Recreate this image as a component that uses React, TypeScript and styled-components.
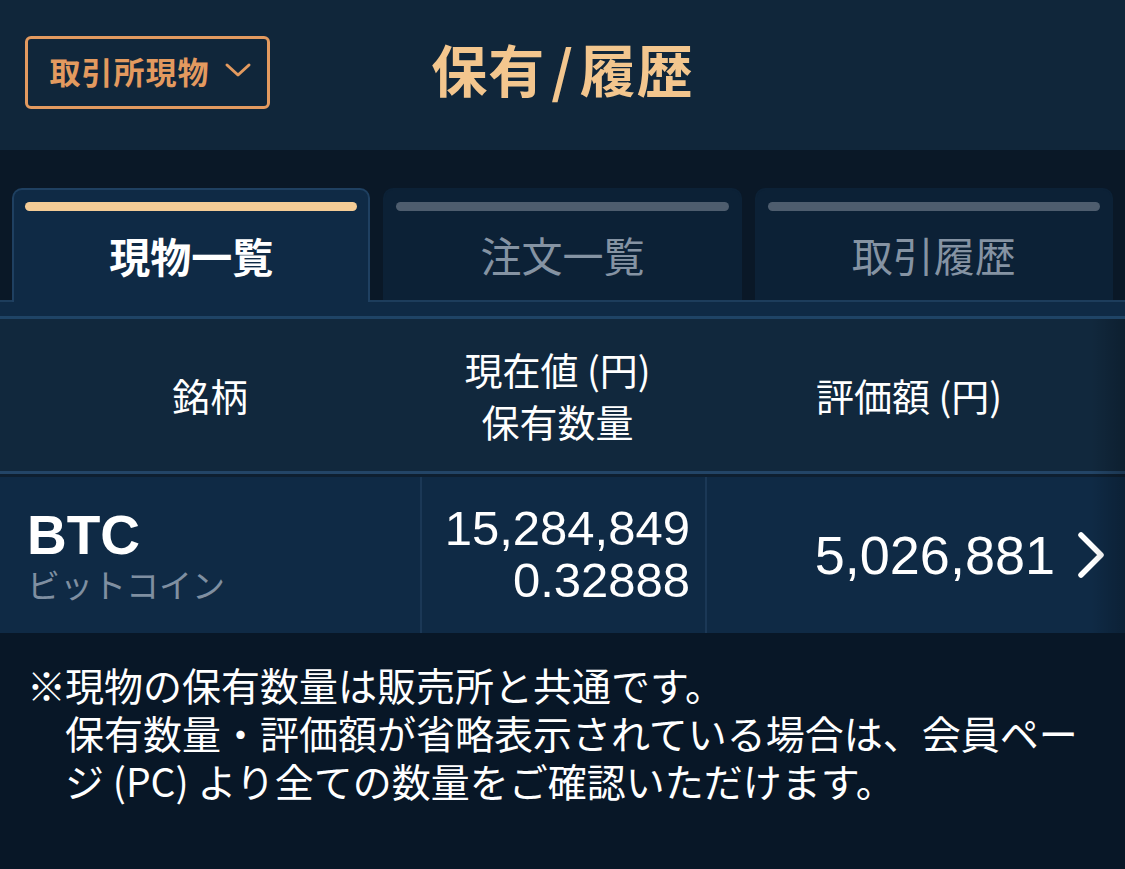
import React from 'react'
import styled, { createGlobalStyle } from 'styled-components'

const jp = `"Noto Sans CJK JP", "Noto Sans", sans-serif`
const num = `"Liberation Sans", Arial, "Noto Sans CJK JP", sans-serif`

const GlobalStyle = createGlobalStyle`
    html, body {
        margin: 0;
        padding: 0;
        background: #081727;
    }
    body {
        font-family: ${jp};
        color: #ffffff;
        -webkit-font-smoothing: antialiased;
    }
`

const Page = styled.div`
    width: 1125px;
    min-height: 869px;
    background: #081727;
    overflow: hidden;
`

const Header = styled.header`
    height: 150px;
    background: #10263a;
    display: grid;
    grid-template-columns: 1fr auto 1fr;
    align-items: center;
    padding: 0 25px 6px;
    box-sizing: border-box;
`

const MarketButton = styled.button`
    justify-self: start;
    width: 245px;
    height: 73px;
    border: 3px solid #e39a5f;
    border-radius: 6px;
    background: transparent;
    color: #e39a5f;
    font-family: ${jp};
    font-size: 31px;
    font-weight: 700;
    letter-spacing: 1px;
    display: flex;
    align-items: center;
    justify-content: center;
    gap: 14px;
    padding: 0 0 4px 6px;
    cursor: pointer;
`

const Title = styled.h1`
    margin: 0 0 10px;
    font-family: ${jp};
    font-size: 56px;
    font-weight: 700;
    color: #f3c68e;
    letter-spacing: 1px;
`

const Slash = styled.span`
    margin: 0 6px;
`

const Spacer = styled.div`
    height: 38px;
    background: #0a1827;
`

const TabBar = styled.div`
    display: flex;
    gap: 13px;
    padding: 0 12px;
    height: 112px;
    border-bottom: 2px solid #1d3d5c;
    background: #0a1827;
`

const Tab = styled.div<{ $active?: boolean }>`
    flex: 1;
    display: flex;
    flex-direction: column;
    padding: 12px 11px 0;
    box-sizing: border-box;
    border-radius: 10px 10px 0 0;
    background: ${(p) => (p.$active ? '#0f2a45' : '#0c2136')};
    border: 2px solid ${(p) => (p.$active ? '#1f4061' : '#0c2136')};
    border-bottom: none;
    margin-bottom: ${(p) => (p.$active ? '-2px' : '0')};
`

const TabBarIndicator = styled.div<{ $active?: boolean }>`
    height: 9px;
    border-radius: 5px;
    background: ${(p) => (p.$active ? '#f4cc96' : '#4e5d6e')};
`

const TabLabel = styled.div<{ $active?: boolean }>`
    flex: 1;
    display: flex;
    align-items: center;
    justify-content: center;
    font-size: 41px;
    font-weight: ${(p) => (p.$active ? 700 : 400)};
    color: ${(p) => (p.$active ? '#ffffff' : '#8593a3')};
    padding-bottom: 4px;
`

const Strip = styled.div`
    height: 14px;
    background: #0f2a45;
    border-bottom: 3px solid #1f4466;
`

const Table = styled.div`
    position: relative;

    &::after {
        content: '';
        position: absolute;
        top: 0;
        right: 0;
        bottom: 0;
        width: 34px;
        background: linear-gradient(to right, rgba(0, 0, 0, 0), rgba(0, 0, 0, 0.22));
        pointer-events: none;
    }
`

const HeadRow = styled.div`
    display: grid;
    grid-template-columns: 420px 285px 1fr;
    height: 152px;
    background: #11283d;
    border-bottom: 3px solid #234567;
`

const HeadCell = styled.div`
    display: flex;
    flex-direction: column;
    align-items: center;
    justify-content: center;
    font-size: 38px;
    line-height: 52px;
    color: #ffffff;
`

const MidHeadCell = styled(HeadCell)`
    padding-right: 10px;
`

const RightHeadCell = styled(HeadCell)`
    padding-right: 12px;
`

const DataRow = styled.div`
    display: grid;
    grid-template-columns: 420px 285px 1fr;
    height: 159px;
    background: #0f2a45;
    border-top: 3px solid #0e1f30;
    box-sizing: border-box;
`

const Cell = styled.div<{ $align?: 'left' | 'right' }>`
    display: flex;
    flex-direction: column;
    justify-content: center;
    align-items: ${(p) => (p.$align === 'right' ? 'flex-end' : 'flex-start')};
    border-left: 2px solid #1b3856;
    &:first-child {
        border-left: none;
    }
`

const SymbolCell = styled(Cell)`
    padding-left: 27px;
`

const Symbol = styled.div`
    font-family: ${num};
    font-size: 55px;
    font-weight: 700;
    line-height: 58px;
    color: #ffffff;
`

const SymbolName = styled.div`
    font-size: 33px;
    line-height: 40px;
    color: #7f8fa1;
`

const PriceCell = styled(Cell)`
    padding-right: 15px;
    padding-bottom: 2px;
`

const Figure = styled.div<{ $size: number }>`
    font-family: ${num};
    font-size: ${(p) => p.$size}px;
    line-height: 52px;
    color: #ffffff;
`

const ValueCell = styled(Cell)`
    flex-direction: row;
    align-items: center;
    justify-content: flex-end;
    gap: 20px;
    padding-right: 18px;
`

const Note = styled.div`
    display: flex;
    padding: 27px 20px 0 27px;
    font-size: 39px;
    line-height: 48px;
    color: #ffffff;
`

const Mark = styled.span`
    flex: none;
    width: 38px;
`

const NoteText = styled.p`
    margin: 0;
`

const Chevron = () => (
    <svg width="32" height="48" viewBox="0 0 32 48" fill="none">
        <polyline points="6,4 26,24 6,44" stroke="#ffffff" strokeWidth="5.5" strokeLinecap="round" strokeLinejoin="round" />
    </svg>
)

const DownChevron = () => (
    <svg width="28" height="18" viewBox="0 0 28 18" fill="none">
        <polyline points="3,4 14,14 25,4" stroke="#e39a5f" strokeWidth="3" strokeLinecap="round" strokeLinejoin="round" />
    </svg>
)

const tabs = ['現物一覧', '注文一覧', '取引履歴']

export default function App() {
    return (
        <Page>
            <GlobalStyle />
            <Header>
                <MarketButton>
                    取引所現物
                    <DownChevron />
                </MarketButton>
                <Title>
                    保有<Slash>/</Slash>履歴
                </Title>
                <div />
            </Header>
            <Spacer />
            <TabBar>
                {tabs.map((t, i) => (
                    <Tab key={t} $active={i === 0}>
                        <TabBarIndicator $active={i === 0} />
                        <TabLabel $active={i === 0}>{t}</TabLabel>
                    </Tab>
                ))}
            </TabBar>
            <Strip />
            <Table>
                <HeadRow>
                    <HeadCell>銘柄</HeadCell>
                    <MidHeadCell>
                        <span>現在値 (円)</span>
                        <span>保有数量</span>
                    </MidHeadCell>
                    <RightHeadCell>評価額 (円)</RightHeadCell>
                </HeadRow>
                <DataRow>
                    <SymbolCell>
                        <Symbol>BTC</Symbol>
                        <SymbolName>ビットコイン</SymbolName>
                    </SymbolCell>
                    <PriceCell $align="right">
                        <Figure $size={49}>15,284,849</Figure>
                        <Figure $size={49}>0.32888</Figure>
                    </PriceCell>
                    <ValueCell>
                        <Figure $size={54}>5,026,881</Figure>
                        <Chevron />
                    </ValueCell>
                </DataRow>
            </Table>
            <Note>
                <Mark>※</Mark>
                <NoteText>
                    現物の保有数量は販売所と共通です。
                    <br />
                    保有数量・評価額が省略表示されている場合は、会員ページ (PC) より全ての数量をご確認いただけます。
                </NoteText>
            </Note>
        </Page>
    )
}
